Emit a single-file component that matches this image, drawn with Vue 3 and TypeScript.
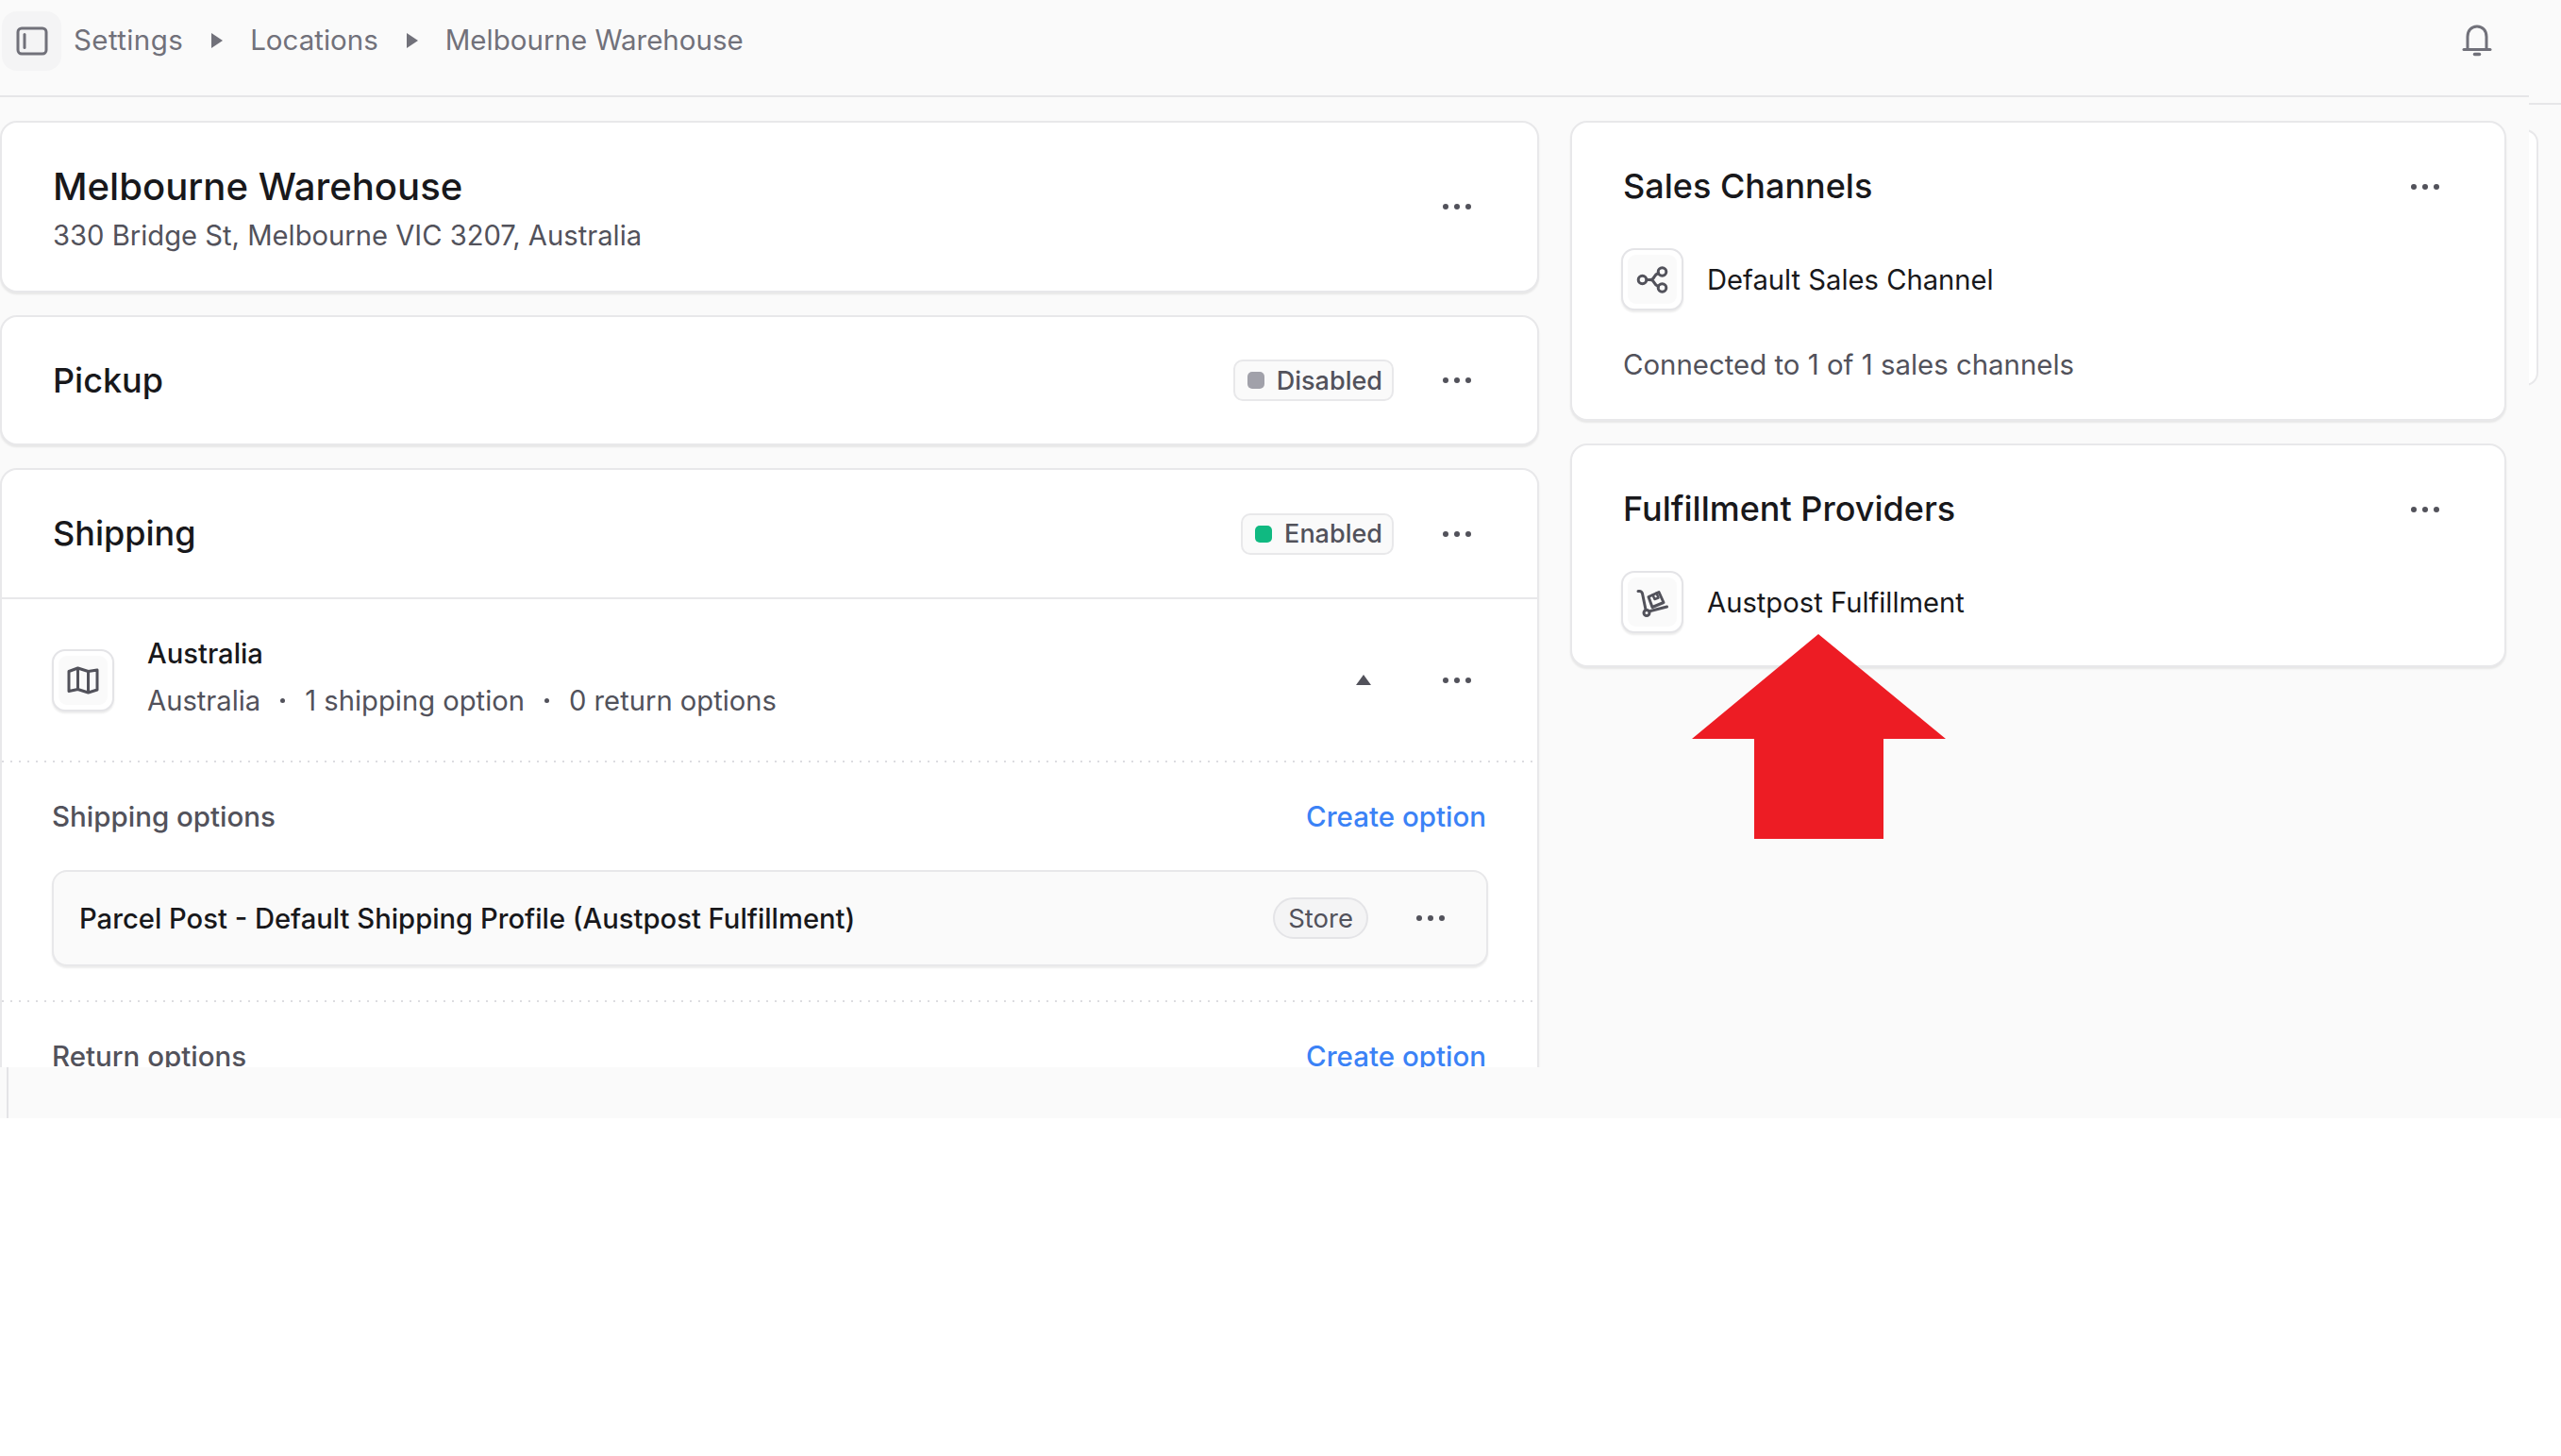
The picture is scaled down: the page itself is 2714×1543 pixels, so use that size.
<script setup lang="ts">
const dots: number[] = [1, 2, 3];
</script>

<template>
  <div class="app">
    <header class="top">
      <div class="crumbs">
        <button class="toggle">
          <svg width="34" height="31" viewBox="0 0 34 31" fill="none" stroke="#71717a" stroke-width="3">
            <rect x="2" y="2" width="30" height="27" rx="4" />
            <path d="M9 8.500V22.500" stroke-linecap="round" />
          </svg>
        </button>
        <span class="crumb first">Settings</span>
        <span class="tri"></span>
        <span class="crumb">Locations</span>
        <span class="tri"></span>
        <span class="crumb">Melbourne Warehouse</span>
      </div>
      <svg class="bell" width="32" height="34" viewBox="0 0 32 34" fill="none" stroke="#71717a" stroke-width="3" stroke-linecap="round">
        <path d="M6 25V13C6 6.500 10 2 16 2s10 4.500 10 11v12" />
        <path d="M2 26.500h28" />
        <path d="M13.500 31.500h5" stroke-width="3.500" />
      </svg>
    </header>

    <main class="scroll">
      <section class="col left">
        <div class="card loc">
          <div class="grow loc-text">
            <h1 class="title">Melbourne Warehouse</h1>
            <p class="sub addr">330 Bridge St, Melbourne VIC 3207, Australia</p>
          </div>
          <span class="dots"><i v-for="d in dots" :key="d"></i></span>
        </div>

        <div class="card pickup">
          <h2 class="head grow">Pickup</h2>
          <span class="badge"><b class="dot grey"></b>Disabled</span>
          <span class="dots"><i v-for="d in dots" :key="d"></i></span>
        </div>

        <div class="card shipping">
          <div class="ship-head">
            <h2 class="head grow">Shipping</h2>
            <span class="badge"><b class="dot green"></b>Enabled</span>
            <span class="dots"><i v-for="d in dots" :key="d"></i></span>
          </div>

          <div class="zone">
            <span class="icon-box">
              <span class="icon-in">
                <svg width="34" height="30" viewBox="0 0 34 30" fill="none" stroke="#52525b" stroke-width="3" stroke-linejoin="round">
                  <path d="M2 5.500 11.500 2l11 3.500L32 4v21l-9.500 3-11-3.500L2 26.500z" />
                  <path d="M11.500 2v22.500M22.500 5.500V28" />
                </svg>
              </span>
            </span>
            <div class="grow zone-text">
              <div class="name">Australia</div>
              <div class="sub meta">
                <span>Australia</span><span class="sep"></span><span>1 shipping option</span><span class="sep"></span><span>0 return options</span>
              </div>
            </div>
            <span class="up"></span>
            <span class="dots"><i v-for="d in dots" :key="d"></i></span>
          </div>

          <div class="dotted"></div>

          <div class="options">
            <div class="opt-head">
              <span class="sub section">Shipping options</span>
              <a class="link">Create option</a>
            </div>
            <div class="opt-card">
              <span class="name grow">Parcel Post - Default Shipping Profile (Austpost Fulfillment)</span>
              <span class="pill">Store</span>
              <span class="dots"><i v-for="d in dots" :key="d"></i></span>
            </div>
          </div>

          <div class="dotted"></div>

          <div class="options">
            <div class="opt-head">
              <span class="sub section">Return options</span>
              <a class="link">Create option</a>
            </div>
          </div>
        </div>
      </section>

      <section class="col right">
        <div class="card sales">
          <div class="side-head">
            <h2 class="head grow">Sales Channels</h2>
            <span class="dots"><i v-for="d in dots" :key="d"></i></span>
          </div>
          <div class="prov">
            <span class="icon-box">
              <span class="icon-in">
                <svg width="34" height="30" viewBox="0 0 34 30" fill="none" stroke="#52525b" stroke-width="3" stroke-linecap="round">
                  <circle cx="6.500" cy="15.500" r="4.300" />
                  <circle cx="27.500" cy="7" r="4.300" />
                  <circle cx="27.500" cy="24" r="4.300" />
                  <path d="M11 15.500h4c2 0 3-1 4-3s3-3.500 4.500-4M15 15.500c2 0 3 1 4 3s3 3.500 4.500 4" />
                </svg>
              </span>
            </span>
            <span class="prov-name">Default Sales Channel</span>
          </div>
          <p class="sub connected">Connected to 1 of 1 sales channels</p>
        </div>

        <div class="card fulfil">
          <div class="side-head">
            <h2 class="head grow">Fulfillment Providers</h2>
            <span class="dots"><i v-for="d in dots" :key="d"></i></span>
          </div>
          <div class="prov">
            <span class="icon-box">
              <span class="icon-in">
                <svg width="36" height="32" viewBox="0 0 36 32" fill="none" stroke="#52525b" stroke-width="3" stroke-linecap="round" stroke-linejoin="round">
                  <path d="M3 4.500h1.500c1.500 0 2.500 1 3 2.500L11 24" />
                  <circle cx="12" cy="27.500" r="3" />
                  <path d="M16 25.500 33.500 21" />
                  <path d="m14 10.500 11-5 5 11-12 5z" />
                  <path d="m18.500 8.500 2 4.500 4-1.500-2-5" stroke-width="2.500" />
                </svg>
              </span>
            </span>
            <span class="prov-name">Austpost Fulfillment</span>
          </div>
        </div>
      </section>
    </main>

    <footer class="band"><span class="band-line"></span></footer>

    <div class="edge-line"></div>
    <div class="edge-card"></div>

    <svg class="arrow" width="270" height="218" viewBox="0 0 270 218">
      <path d="M134 0 269 111H203V217H66V111H0z" fill="#ed1c24" />
    </svg>
  </div>
</template>

<style>
html, body { margin: 0; background: #fff; }
</style>

<style scoped>
.app {
  position: relative;
  width: 2714px;
  height: 1185px;
  background: #fafafa;
  overflow: hidden;
  display: flex;
  flex-direction: column;
  font-family: Inter, "Liberation Sans", sans-serif;
  font-size: 29.200px;
  color: #18181b;
  font-weight: 400;
}
h1, h2, p { margin: 0; }
.grow { flex: 1; min-width: 0; }

.top {
  width: 2680px;
  height: 103px;
  box-sizing: border-box;
  flex: none;
  border-bottom: 2px solid #e6e6e8;
  display: flex;
  align-items: flex-start;
  justify-content: space-between;
}
.crumbs { display: flex; align-items: center; height: 64px; margin: 11px 0 0 2px; color: #71717a; font-size: 29.500px; }
.toggle {
  width: 63px; height: 63px; border: 0; padding: 0; border-radius: 16px;
  background: #f4f4f5; display: flex; align-items: center; justify-content: center;
  margin-right: 13px;
}
.crumb { line-height: 1; }
.first { letter-spacing: .4px; }
.tri {
  width: 0; height: 0; margin: 0 29px 0 30px;
  border-left: 12px solid #71717a; border-top: 8px solid transparent; border-bottom: 8px solid transparent;
}
.bell { margin: 26px 39px 0 0; }

.scroll {
  flex: none;
  height: 1028px;
  box-sizing: border-box;
  overflow: hidden;
  padding-top: 25px;
  display: grid;
  grid-template-columns: 1631px 992px;
  column-gap: 33px;
  align-items: start;
}
.col { display: flex; flex-direction: column; gap: 24px; }

.card {
  box-sizing: border-box;
  background: #fff;
  border: 2px solid #e8e8ea;
  border-radius: 18px;
  box-shadow: 0 2px 2px rgba(0, 0, 0, .08);
}
.title { font-size: 40.100px; font-weight: 500; line-height: 1.2; color: #18181b; }
.head { font-size: 36px; font-weight: 500; line-height: 1.2; color: #18181b; }
.sub { color: #52525b; }
.section { font-size: 29.500px; font-weight: 500; }
.name { color: #18181b; font-weight: 500; }
.prov-name { color: #18181b; }

.dots { display: inline-flex; gap: 6px; margin-left: 52px; flex: none; }
.dots i { width: 6px; height: 6px; border-radius: 50%; background: #52525b; display: block; }

.loc, .pickup, .ship-head { display: flex; align-items: center; padding: 0 70px 0 54px; }
.loc { height: 182px; }
.loc-text { padding-top: 3px; }
.addr { margin-top: 9px; }
.pickup { height: 138px; }
.pickup .head { padding-top: 2px; }
.shipping { height: 800px; }
.ship-head { height: 135px; border-bottom: 2px solid #e8e8ea; box-sizing: content-box; }

.badge {
  display: inline-flex; align-items: center; height: 44px; box-sizing: border-box; padding: 0 10px 0 13px;
  border: 2px solid #e8e8ea; border-radius: 10px; background: #fafafa; color: #52525b; font-size: 27px;
  line-height: 1; font-weight: 500;
}
.dot { width: 18px; height: 18px; border-radius: 5px; margin-right: 13px; }
.grey { background: #a1a1aa; }
.green { background: #10b981; }

.zone { height: 171px; display: flex; align-items: center; padding: 0 70px 0 53px; }
.icon-box {
  width: 66px; height: 66px; box-sizing: border-box; padding: 5px; flex: none;
  border: 2px solid #e4e4e7; border-radius: 14px; background: #fff;
  box-shadow: 0 2px 2px rgba(0, 0, 0, .08); display: block;
}
.icon-in {
  width: 100%; height: 100%; background: #fafafa; border-radius: 9px;
  display: flex; align-items: center; justify-content: center;
}
.zone-text { margin: -6px 0 0 35px; display: flex; flex-direction: column; gap: 14px; line-height: 36px; }
.meta { display: flex; align-items: center; }
.sep { width: 5px; height: 5px; border-radius: 50%; background: #52525b; margin: 0 21px; }
.up {
  width: 0; height: 0; margin-right: 22px;
  border-left: 8px solid transparent; border-right: 8px solid transparent; border-bottom: 11px solid #52525b;
}
.up + .dots { margin-left: 54px; }

.dotted {
  height: 2px; margin-right: 4px;
  background: repeating-linear-gradient(90deg, #dcdce0 0 2px, transparent 2px 9px);
}
.options { padding: 0 52px 0 53px; height: 252px; box-sizing: border-box; }
.opt-head { height: 114px; display: flex; align-items: center; justify-content: space-between; }
.link { color: #3b82f6; font-weight: 500; font-size: 29.500px; margin-right: 2px; }
.opt-card {
  height: 102px; box-sizing: border-box; display: flex; align-items: center; padding: 0 44px 0 27px;
  background: #fafafa; border: 2px solid #e8e8ea; border-radius: 16px; box-shadow: 0 2px 2px rgba(0, 0, 0, .08);
}
.pill {
  height: 44px; box-sizing: border-box; padding: 0 14px; display: inline-flex; align-items: center;
  border: 2px solid #e4e4e7; border-radius: 22px; background: #f4f4f5; color: #52525b; font-size: 27.500px;
}
.opt-card .dots { margin-left: 51px; }

.sales { height: 318px; padding: 0 69px 0 54px; }
.fulfil { height: 237px; padding: 0 69px 0 54px; }
.side-head { display: flex; align-items: center; height: 68px; margin-top: 34px; }
.prov { display: flex; align-items: center; gap: 25px; margin-top: 31px; }
.prov .icon-box { margin-left: -2px; }
.connected { margin-top: 40px; line-height: 36px; font-size: 29.400px; }

.band { flex: none; height: 54px; background: #fafafa; display: flex; }
.band-line { width: 2px; margin-left: 7px; background: #e4e4e7; }

.edge-line { position: absolute; left: 2680px; right: 0; top: 109px; height: 2px; background: #e6e6e8; }
.edge-card {
  position: absolute; left: 2662px; top: 137px; width: 28px; height: 272px; box-sizing: border-box;
  background: #fff; border: 2px solid #e8e8ea; border-radius: 18px;
  clip-path: inset(0 0 0 18px);
}
.arrow { position: absolute; left: 1793px; top: 672px; }
</style>
